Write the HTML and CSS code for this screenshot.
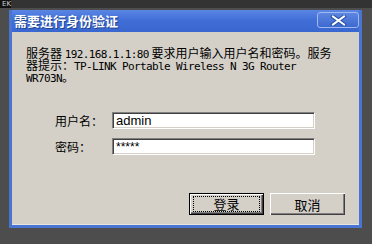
FILE: index.html
```html
<!DOCTYPE html>
<html>
<head>
<meta charset="utf-8">
<link rel="stylesheet" href="styles.css">
</head>
<body>
<div class="backdrop">
  <div class="topstrip"><span class="ek">EK</span></div>
  <div class="dialog">
    <div class="titlebar">
      <span class="title">需要进行身份验证</span>
      <button class="close" aria-label="关闭">
        <svg width="17" height="11" viewBox="0 0 17 11">
          <path d="M3 1.5 L14 9.5 M14 1.5 L3 9.5" stroke="#2a4fa8" stroke-width="4" stroke-linecap="square"/>
          <path d="M3 1.5 L14 9.5 M14 1.5 L3 9.5" stroke="#ffffff" stroke-width="2" stroke-linecap="square"/>
        </svg>
      </button>
    </div>
    <div class="content">
      <div class="message">
        <div class="line">服务器 <span class="lat">192.168.1.1:80</span> 要求用户输入用户名和密码。服务</div>
        <div class="line">器提示：<span class="lat">TP-LINK Portable Wireless N 3G Router</span></div>
        <div class="line"><span class="lat">WR703N</span>。</div>
      </div>
      <div class="form">
        <div class="row">
          <label class="label">用户名：</label>
          <div class="field">admin</div>
        </div>
        <div class="row">
          <label class="label">密码：</label>
          <div class="field pw">*****</div>
        </div>
      </div>
      <div class="buttons">
        <button class="btn default"><span class="focus">登录</span></button>
        <button class="btn">取消</button>
      </div>
    </div>
  </div>
</div>
</body>
</html>
```
FILE: styles.css
```css
html, body {
  margin: 0;
  padding: 0;
}
body {
  background: #4d4d4d;
  width: 372px;
  height: 244px;
  overflow: hidden;
  font-family: "Noto Sans CJK SC", "Liberation Sans", sans-serif;
}
.backdrop {
  position: relative;
  height: 244px;
}
.topstrip {
  height: 8px;
  background: #333333;
  display: flex;
  align-items: center;
}
.ek {
  font-family: "DejaVu Sans", sans-serif;
  font-size: 7px;
  color: #cfcfcf;
  padding-left: 2px;
  background: #111;
  line-height: 8px;
}
.dialog {
  margin: 2px 0 0 9px;
  width: 353px;
  height: 218px;
  box-sizing: border-box;
  background: #4a74d2;
  padding: 0 3px 3px 3px;
  display: flex;
  flex-direction: column;
}
.titlebar {
  height: 22px;
  display: flex;
  align-items: center;
  justify-content: space-between;
  background: linear-gradient(#5a86e4, #3f6dd6 50%, #3a66cf);
  padding-left: 2px;
}
.title {
  color: #ffffff;
  font-size: 13px;
  font-weight: bold;
  line-height: 14px;
  text-shadow: 1px 1px 0 #21448f;
}
.close {
  width: 42px;
  height: 16px;
  margin: 0 0 2px 0;
  padding: 0;
  border: 1px solid #9fb9ee;
  border-radius: 3px;
  background: linear-gradient(#5c86e0, #3e69cf);
  display: flex;
  align-items: center;
  justify-content: center;
}
.content {
  flex: 1;
  background: #d4d0c8;
  border-bottom: 1px solid #e8e6e0;
  padding: 15px 14px 0 14px;
  display: flex;
  flex-direction: column;
}
.message {
  display: flex;
  flex-direction: column;
  font-family: "Noto Sans CJK SC", sans-serif;
  font-size: 12px;
  color: #000;
}
.line {
  height: 12px;
  line-height: 12px;
  white-space: nowrap;
}
.lat {
  font-family: "DejaVu Sans Mono", "Liberation Mono", monospace;
  font-size: 11px;
  line-height: 12px;
  letter-spacing: -0.62px;
}
.form {
  margin-top: 29px;
  padding-left: 29px;
  display: flex;
  flex-direction: column;
  gap: 9px;
}
.row {
  display: flex;
  align-items: center;
}
.label {
  width: 57px;
  font-size: 12px;
  line-height: 17px;
  color: #000;
}
.field {
  width: 203px;
  height: 17px;
  box-sizing: border-box;
  background: #fff;
  border-top: 1px solid #808080;
  border-left: 1px solid #808080;
  border-right: 1px solid #ffffff;
  border-bottom: 1px solid #ffffff;
  box-shadow: inset 1px 1px 0 #404040, inset -1px -1px 0 #d4d0c8;
  font-family: "Liberation Sans", sans-serif;
  font-size: 13px;
  line-height: 15px;
  padding-left: 3px;
  color: #000;
}
.pw {
  font-size: 12px;
  line-height: 17px;
}
.buttons {
  margin-top: 38px;
  display: flex;
  justify-content: flex-end;
  gap: 6px;
}
.btn {
  width: 75px;
  height: 22px;
  box-sizing: border-box;
  background: #d4d0c8;
  border: none;
  padding: 0;
  box-shadow: inset 1px 1px 0 #ffffff, inset -1px -1px 0 #404040, inset -2px -2px 0 #808080;
  font-family: "Noto Sans CJK SC", sans-serif;
  font-size: 13px;
  color: #000;
  display: flex;
  align-items: center;
  justify-content: center;
}
.btn.default {
  border: 1px solid #000;
}
.focus {
  box-sizing: border-box;
  width: 65px;
  height: 14px;
  outline: 1px dotted #000;
  display: flex;
  align-items: center;
  justify-content: center;
  line-height: 14px;
}
```
